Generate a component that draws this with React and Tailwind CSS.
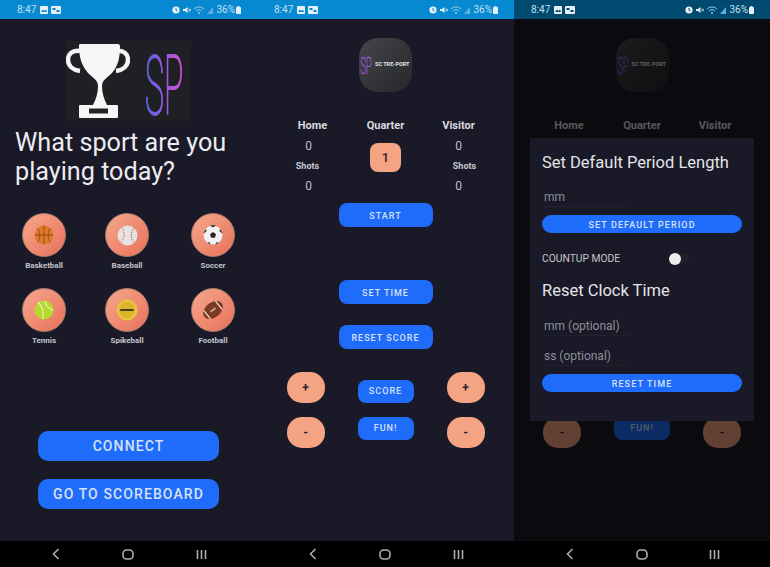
const FONT = { fontFamily: "Roboto, sans-serif" };

function StatusBar({ dim }) {
  const bar = dim ? "#004a70" : "#0789d1";
  return (
    <div
      className={`flex h-[19px] shrink-0 items-center justify-between pl-[17px] pr-[16px] text-[10px] text-[#c4e0f0] ${dim ? "bg-[#004a70]" : "bg-[#0789d1]"}`}
    >
      <div className="flex items-center gap-[3px]">
        <span className="mr-[1px]">8:47</span>
        <svg width="8" height="8" viewBox="0 0 8 8">
          <rect width="8" height="8" rx="1" fill="#e4eff6" />
          <path d="M1 6l2-2.500 1.500 1.500L6 3.500 7 6z" fill={bar} />
        </svg>
        <svg width="10" height="8" viewBox="0 0 10 8">
          <rect width="10" height="8" rx="1" fill="#e4eff6" />
          <rect x="1.500" y="2" width="3" height="2" fill={bar} />
          <rect x="5.500" y="4" width="3" height="2" fill={bar} />
        </svg>
      </div>
      <div className="flex items-center gap-[3px]">
        <svg width="8" height="8" viewBox="0 0 8 8">
          <circle cx="4" cy="4" r="3.600" fill="#e4eff6" />
          <path d="M4 2v2.200l1.400.8" stroke={bar} fill="none" />
        </svg>
        <svg width="8" height="8" viewBox="0 0 8 8">
          <path d="M0 3h2l2.500-2v6L2 5H0z" fill="#e4eff6" />
          <path d="M5.500 2.500l2.500 3M8 2.500l-2.500 3" stroke="#e4eff6" strokeWidth="0.800" />
        </svg>
        <svg width="10" height="8" viewBox="0 0 10 8">
          <path d="M0 3a7 7 0 0 1 10 0M2 5a4.200 4.200 0 0 1 6 0" stroke="#9ccde8" fill="none" />
          <circle cx="5" cy="7" r="1" fill="#9ccde8" />
        </svg>
        <svg width="6" height="8" viewBox="0 0 6 8">
          <path d="M0 8L6 1v7z" fill="#5fb0de" />
        </svg>
        <span>36%</span>
        <svg width="5" height="8" viewBox="0 0 5 8" className="-ml-[2px]">
          <rect y="1" width="5" height="7" rx="0.800" fill="#e4eff6" />
          <rect x="1.500" width="2" height="1" fill="#e4eff6" />
        </svg>
      </div>
    </div>
  );
}

function NavBar() {
  return (
    <div className="flex h-[26px] shrink-0 items-center bg-black">
      <div className="flex w-full items-center justify-between pl-[52px] pr-[50px]">
        <svg width="8" height="12" viewBox="0 0 8 12">
          <path d="M6.500 1L1.500 6l5 5" stroke="#adadb0" strokeWidth="1.600" fill="none" />
        </svg>
        <svg width="12" height="11" viewBox="0 0 12 11">
          <rect x="1" y="1" width="10" height="9" rx="3.500" stroke="#adadb0" strokeWidth="1.600" fill="none" />
        </svg>
        <svg width="11" height="11" viewBox="0 0 11 11">
          <path d="M1.500 1v9M5.500 1v9M9.500 1v9" stroke="#adadb0" strokeWidth="1.600" />
        </svg>
      </div>
    </div>
  );
}

function Trophy() {
  return (
    <svg width="64" height="80" viewBox="0 0 64 80">
      <path d="M14 10C6 9 2 13 2 19c0 6 5 10 12 11" stroke="#f4f4f4" strokeWidth="4.500" fill="none" />
      <path d="M50 10c8-1 12 3 12 9 0 6-5 10-12 11" stroke="#f4f4f4" strokeWidth="4.500" fill="none" />
      <path d="M14 3h38c1 0 2 1 2 2 0 12-2 20-8 27-5 5-10 7-10 13 0 7 2 13 5 19H27c3-6 5-12 5-19 0-6-5-8-10-13-6-7-9-15-9-27 0-1 0-2 1-2z" fill="#f6f6f6" />
      <rect x="13" y="64" width="39" height="13" rx="1" fill="#f6f6f6" />
      <rect x="23" y="67.500" width="19" height="5" fill="#23242a" />
    </svg>
  );
}

function BigLogo() {
  return (
    <div className="mx-auto mt-[22px] flex h-[80px] w-[125px] items-start bg-[#1f2023]">
      <Trophy />
      <svg width="61" height="80" viewBox="0 0 61 80" className="overflow-visible">
        <defs>
          <linearGradient id="sp" x1="0" x2="1" y1="0" y2="0">
            <stop offset="0" stopColor="#5a63e8" />
            <stop offset="1" stopColor="#d44fd8" />
          </linearGradient>
        </defs>
        <text x="15" y="28.500" fontSize="32" fontWeight="100" fill="url(#sp)" stroke="url(#sp)" strokeWidth="0.700" transform="scale(1 2.550)" style={FONT}>
          SP
        </text>
      </svg>
    </div>
  );
}

function Ball({ kind }) {
  if (kind === "basketball")
    return (
      <svg width="20" height="20" viewBox="0 0 20 20">
        <circle cx="10" cy="10" r="9.500" fill="#df7a2c" />
        <path d="M1 10h18M10 .5v19M3.500 3c3 4 3 10 0 14M16.500 3c-3 4-3 10 0 14" stroke="#6a3514" strokeWidth="0.600" fill="none" />
      </svg>
    );
  if (kind === "baseball")
    return (
      <svg width="21" height="21" viewBox="0 0 21 21">
        <circle cx="10.500" cy="10.500" r="10" fill="#e6e2e2" />
        <path d="M5 2.500c3 4 3 10-1 15M17 2.500c-3 4-4 10 0 15" stroke="#c9544c" strokeWidth="0.900" strokeDasharray="1.400 1" fill="none" />
      </svg>
    );
  if (kind === "soccer")
    return (
      <svg width="20" height="20" viewBox="0 0 20 20">
        <circle cx="10" cy="10" r="9.500" fill="#f2f2f2" />
        <path d="M10 7l3 2.200-1.100 3.500H8.100L7 9.200z" fill="#26262b" />
        <path d="M7 .8l3 1.400 3-1.400C11 .2 9 .2 7 .8zM.9 8.500l2.300-2 .3-2.500C1.800 5 1 6.800.9 8.500zM19.100 8.500l-2.300-2-.3-2.500c1.700 1 2.500 2.800 2.600 4.500zM4.500 17l2.500.8.5 1.500C6.200 19 5.200 18 4.500 17zM15.500 17l-2.500.8-.5 1.500c1.300-.3 2.300-1.300 3-2.300z" fill="#26262b" />
      </svg>
    );
  if (kind === "tennis")
    return (
      <svg width="20" height="20" viewBox="0 0 20 20">
        <circle cx="10" cy="10" r="9.500" fill="#b6d92e" />
        <path d="M4 2c4 4 6 9 5 17M11 1c1 5 3 8 8 9" stroke="#eef5c2" strokeWidth="1.100" fill="none" />
      </svg>
    );
  if (kind === "spikeball")
    return (
      <svg width="22" height="22" viewBox="0 0 22 22">
        <circle cx="11" cy="11" r="10.500" fill="#e6c440" />
        <circle cx="11" cy="11" r="8" fill="#dcb42c" />
        <rect x="4" y="10" width="14" height="2" rx="1" fill="#4a3d14" />
      </svg>
    );
  return (
    <svg width="22" height="22" viewBox="0 0 22 22">
      <g transform="rotate(-38 11 11)">
        <ellipse cx="11" cy="11" rx="11" ry="7.500" fill="#7d3a22" />
        <path d="M3.500 5.500v11M18.500 5.500v11" stroke="#f0e3d6" strokeWidth="1.200" />
        <path d="M7.500 11h7M9 9.800v2.400M11 9.800v2.400M13 9.800v2.400" stroke="#f0e3d6" strokeWidth="0.700" />
      </g>
    </svg>
  );
}

function Sport({ name, kind, className = "" }) {
  return (
    <div className={`flex w-[44px] flex-col items-center ${className}`}>
      <div className="flex h-[44px] w-[44px] items-center justify-center rounded-full border border-[#a97c6c] bg-gradient-to-br from-[#f5a78c] to-[#e8705a]">
        <Ball kind={kind} />
      </div>
      <span className="mt-[4px] whitespace-nowrap text-[8px] font-bold leading-[10px] text-[#c3c3cc]">{name}</span>
    </div>
  );
}

function BigButton({ children, className = "" }) {
  return (
    <button className={`mx-auto flex h-[30px] w-[181px] items-center justify-center rounded-[10px] bg-[#1f6bfa] pt-[1px] text-[14px] font-medium tracking-[1.100px] text-[#d5e2f7] ${className}`}>
      {children}
    </button>
  );
}

function PickSport() {
  return (
    <div className="flex h-full w-[257px] flex-col bg-[#191927]">
      <StatusBar />
      <BigLogo />
      <h1 className="ml-[15px] mt-[7px] text-[25.200px] leading-[29px] text-[#ececf0]">
        What sport are you
        <br />
        playing today?
      </h1>
      <div className="ml-[22px] mt-[27px] flex gap-[39px]">
        <Sport name="Basketball" kind="basketball" />
        <Sport name="Baseball" kind="baseball" />
        <Sport name="Soccer" kind="soccer" className="ml-[3px]" />
      </div>
      <div className="ml-[22px] mt-[17px] flex gap-[39px]">
        <Sport name="Tennis" kind="tennis" />
        <Sport name="Spikeball" kind="spikeball" />
        <Sport name="Football" kind="football" className="ml-[3px]" />
      </div>
      <BigButton className="mt-[85px]">CONNECT</BigButton>
      <BigButton className="mt-[18px]">GO TO SCOREBOARD</BigButton>
      <div className="flex-1" />
      <NavBar />
    </div>
  );
}

function SmallLogo() {
  return (
    <div className="mx-auto mt-[19px] flex h-[54px] w-[53px] items-center rounded-[19px] bg-gradient-to-br from-[#45464a] to-[#26272b] pl-[1px]">
      <svg width="15" height="26" viewBox="0 0 15 26" className="shrink-0 overflow-visible">
        <text x="0.500" y="9" fontSize="9.500" fontWeight="100" fill="#a45ce0" stroke="#a45ce0" strokeWidth="0.200" transform="scale(1 2.500)" style={FONT}>
          SP
        </text>
      </svg>
      <span className="whitespace-nowrap text-[5.500px] font-bold leading-none text-[#e4e4e8]">SC TRE-PORT</span>
    </div>
  );
}

function PillButton({ children, className = "" }) {
  return (
    <button className={`mx-auto flex h-[24px] w-[94px] items-center justify-center rounded-[8px] bg-[#1f6bfa] pt-[3px] text-[9px] font-medium tracking-[1px] text-[#d5e2f7] ${className}`}>
      {children}
    </button>
  );
}

function Peach({ children }) {
  return (
    <button className="flex h-[31px] w-[38px] items-center justify-center rounded-[15px] bg-[#f4a383] text-[12px] font-bold leading-none text-[#2b2230]">
      {children}
    </button>
  );
}

function Scoreboard({ dim }) {
  return (
    <div className="flex h-full flex-col bg-[#191927]">
      <StatusBar dim={dim} />
      <SmallLogo />
      <div className="mx-auto mt-[27px] grid w-[219px] grid-cols-3 text-center text-[#d9d9df]">
        <div className="flex flex-col items-center">
          <span className="text-[11px] font-bold leading-[14px]">Home</span>
          <span className="-ml-[8px] mt-[5px] text-[12px] leading-[16px] text-[#bfbfc6]">0</span>
          <span className="-ml-[10px] mt-[6px] text-[9px] font-bold leading-[12px] text-[#c9c9d0]">Shots</span>
          <span className="-ml-[8px] mt-[6px] text-[12px] leading-[16px] text-[#bfbfc6]">0</span>
        </div>
        <div className="flex flex-col items-center">
          <span className="text-[11px] font-bold leading-[14px]">Quarter</span>
          <div className="mt-[10px] flex h-[29px] w-[31px] items-center justify-center rounded-[8px] bg-[#f4a383] text-[13px] font-medium text-[#2b2230]">1</div>
        </div>
        <div className="flex flex-col items-center">
          <span className="text-[11px] font-bold leading-[14px]">Visitor</span>
          <span className="mt-[5px] text-[12px] leading-[16px] text-[#bfbfc6]">0</span>
          <span className="ml-[12px] mt-[6px] text-[9px] font-bold leading-[12px] text-[#c9c9d0]">Shots</span>
          <span className="mt-[6px] text-[12px] leading-[16px] text-[#bfbfc6]">0</span>
        </div>
      </div>
      <PillButton className="mt-[9px]">START</PillButton>
      <PillButton className="mt-[53px]">SET TIME</PillButton>
      <PillButton className="mt-[21px]">RESET SCORE</PillButton>
      <div className="mx-auto mt-[23px] grid w-[240px] grid-cols-3 justify-items-center gap-y-[14px]">
        <Peach>+</Peach>
        <button className="flex h-[23px] w-[56px] items-center justify-center self-end rounded-[8px] bg-[#1f6bfa] text-[9px] font-medium tracking-[1px] text-[#d5e2f7]">SCORE</button>
        <Peach>+</Peach>
        <Peach>-</Peach>
        <button className="flex h-[23px] w-[56px] items-center justify-center self-start rounded-[8px] bg-[#1f6bfa] text-[9px] font-medium tracking-[1px] text-[#d5e2f7]">FUN!</button>
        <Peach>-</Peach>
      </div>
      <div className="flex-1" />
      <NavBar />
    </div>
  );
}

function Field({ children, className = "" }) {
  return (
    <div className={`ml-[2px] h-[20px] w-[86px] whitespace-nowrap border-b border-[#22222f] text-[12px] leading-[20px] text-[#8e8e97] ${className}`}>
      {children}
    </div>
  );
}

function WideButton({ children }) {
  return (
    <button className="flex h-[18px] w-[200px] items-center justify-center rounded-full bg-[#1f6bfa] pt-[3px] text-[9px] font-medium tracking-[1.100px] text-[#d5e2f7]">
      {children}
    </button>
  );
}

function SettingsModal() {
  return (
    <div className="absolute left-[16px] top-[138px] h-[283px] w-[224px] bg-[#191927] px-[12px] pt-[14px]">
      <h2 className="text-[16.500px] leading-[22px] text-[#e4e4e8]">Set Default Period Length</h2>
      <Field className="mt-[13px]">mm</Field>
      <div className="mt-[8px]">
        <WideButton>SET DEFAULT PERIOD</WideButton>
      </div>
      <div className="relative mt-[20px] flex h-[12px] items-center text-[10.300px] text-[#c6c6cc]">
        COUNTUP MODE
        <span className="absolute left-[127px] h-[8px] w-[20px] rounded-full bg-[#22222b]" />
        <span className="absolute left-[127px] h-[12px] w-[12px] rounded-full bg-[#ececec]" />
      </div>
      <h2 className="mt-[15px] text-[16.500px] leading-[22px] text-[#e4e4e8]">Reset Clock Time</h2>
      <Field className="mt-[14px]">mm (optional)</Field>
      <Field className="mt-[10px]">ss (optional)</Field>
      <div className="mt-[8px]">
        <WideButton>RESET TIME</WideButton>
      </div>
    </div>
  );
}

export default function App() {
  return (
    <div className="flex h-[567px] w-[770px] overflow-hidden bg-black" style={FONT}>
      <PickSport />
      <div className="h-full w-[257px]">
        <Scoreboard />
      </div>
      <div className="relative h-full w-[256px]">
        <Scoreboard dim />
        <div className="absolute inset-x-0 bottom-[26px] top-[19px] bg-black/60" />
        <SettingsModal />
      </div>
    </div>
  );
}
